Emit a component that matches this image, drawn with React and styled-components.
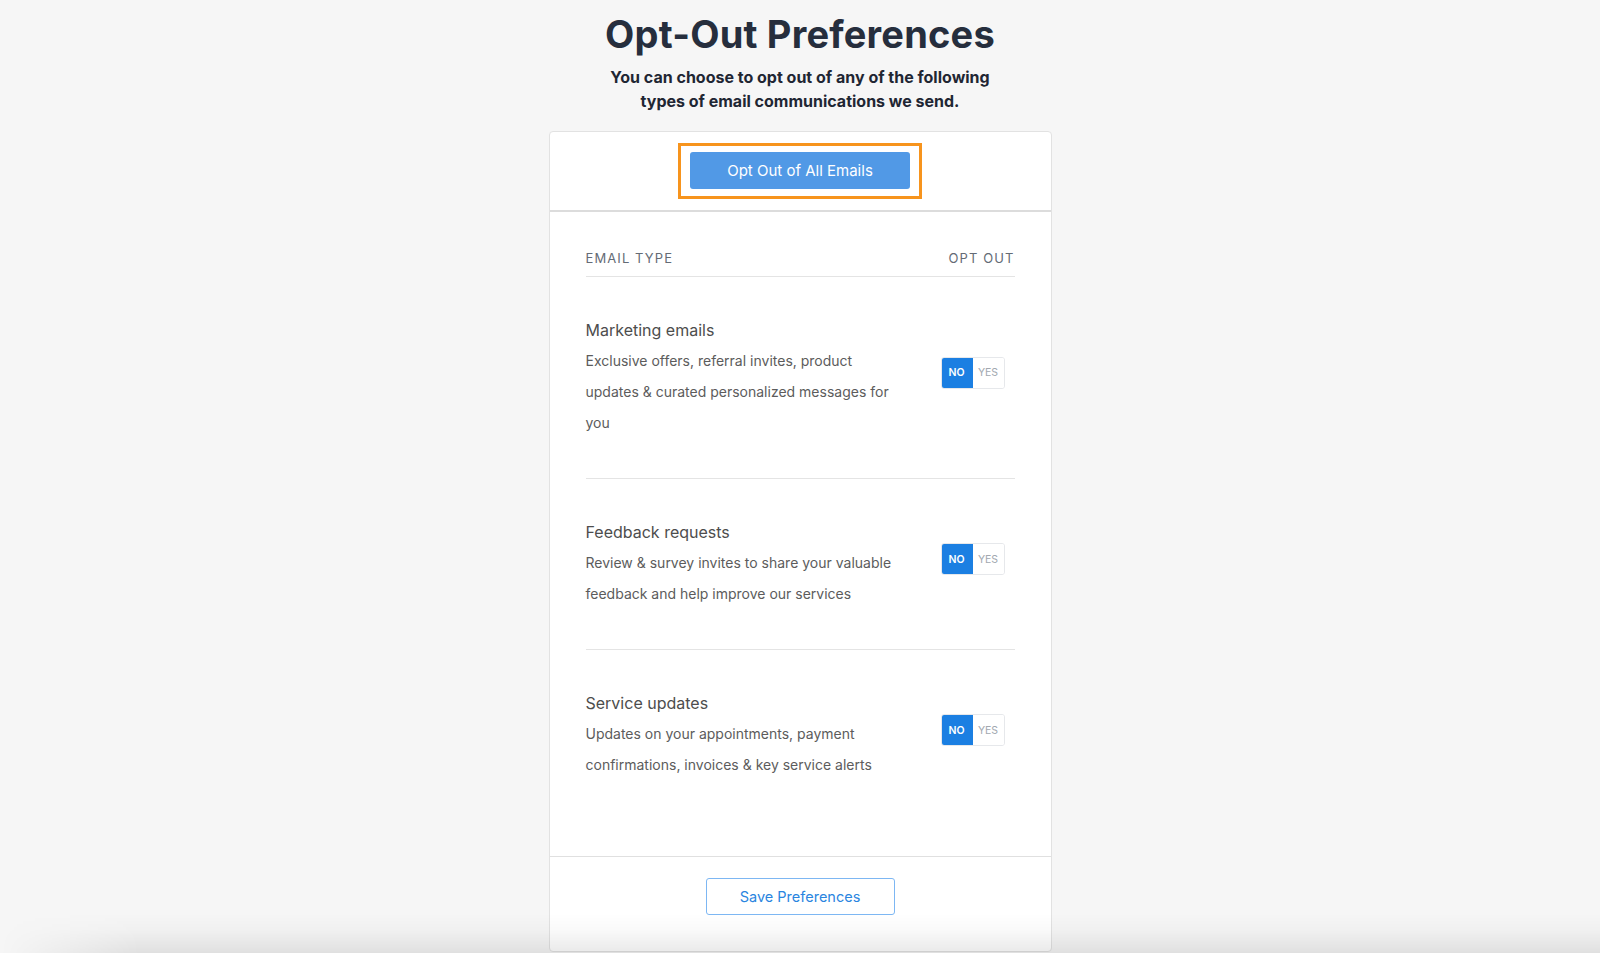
import React from "react";
import styled, { createGlobalStyle } from "styled-components";

const GlobalStyle = createGlobalStyle`
  html, body { margin: 0; padding: 0; }
  body {
    background: #f6f6f6;
    font-family: Inter, "Noto Sans", "Liberation Sans", sans-serif;
    -webkit-font-smoothing: antialiased;
  }
  * { box-sizing: border-box; }
`;

const Page = styled.main`
  display: flex;
  flex-direction: column;
  align-items: center;
  padding-top: 11px;
  min-height: 953px;
`;

const Title = styled.h1`
  margin: 0;
  font-size: 38px;
  line-height: 46px;
  font-weight: 700;
  color: #262e3d;
  letter-spacing: 0.2px;
`;

const Subtitle = styled.p`
  margin: 8px 0 0;
  max-width: 400px;
  text-align: center;
  font-size: 16px;
  line-height: 24px;
  font-weight: 700;
  color: #1f2633;
`;

const Card = styled.section`
  margin-top: 18px;
  width: 503px;
  background: #fff;
  border: 1px solid #e2e2e2;
  border-radius: 4px;
  display: flex;
  flex-direction: column;
`;

const CardHeader = styled.div`
  display: flex;
  justify-content: center;
  padding: 11px 0;
  border-bottom: 2px solid #dcdcdc;
`;

const Highlight = styled.div`
  border: 3px solid #f7941d;
  padding: 6px 9px 7px;
`;

const PrimaryButton = styled.button`
  width: 220px;
  height: 37px;
  border: none;
  border-radius: 3px;
  background: #5199e6;
  color: #fff;
  font-family: inherit;
  font-size: 15px;
  cursor: pointer;
`;

const CardBody = styled.div`
  padding: 0 36px 36px;
`;

const TableHead = styled.div`
  display: flex;
  justify-content: space-between;
  padding: 36px 0 8px;
  border-bottom: 1px solid #e4e4e4;
  font-size: 13px;
  line-height: 20px;
  letter-spacing: 1.1px;
  text-transform: uppercase;
  color: #646b75;
`;

const Row = styled.div`
  display: flex;
  justify-content: space-between;
  align-items: center;
  padding: 38px 0 40px;
  border-bottom: ${(p) => (p.$last ? "none" : "1px solid #e4e4e4")};
`;

const TextCol = styled.div`
  max-width: 318px;
`;

const RowTitle = styled.div`
  font-size: 16px;
  line-height: 30px;
  color: #4d4d4d;
`;

const RowDesc = styled.div`
  font-size: 14px;
  line-height: 31px;
  color: #5c5c5c;
`;

const Toggle = styled.div`
  display: flex;
  margin-right: 10px;
  margin-bottom: 8px;
  border-radius: 3px;
  overflow: hidden;
  border: 1px solid #e6e8eb;
`;

const ToggleOption = styled.span`
  width: ${(p) => (p.$active ? "32px" : "31px")};
  height: ${(p) => (p.$active ? "32px" : "30px")};
  margin: ${(p) => (p.$active ? "-1px 0 -1px -1px" : "0")};
  display: flex;
  align-items: center;
  justify-content: center;
  font-size: 10.5px;
  font-weight: ${(p) => (p.$active ? 600 : 400)};
  background: ${(p) => (p.$active ? "#1b7fe2" : "#fff")};
  color: ${(p) => (p.$active ? "#fff" : "#a2a8b0")};
`;

const CardFooter = styled.div`
  display: flex;
  justify-content: center;
  padding: 21px 0 36px;
  border-top: 1px solid #e0e0e0;
`;

const OutlineButton = styled.button`
  width: 189px;
  height: 37px;
  background: #fff;
  border: 1px solid #7db7f3;
  border-radius: 3px;
  color: #2a85e0;
  font-family: inherit;
  font-size: 14.5px;
  cursor: pointer;
`;

const BottomShade = styled.div`
  position: fixed;
  left: 0;
  right: 0;
  bottom: 0;
  height: 40px;
  pointer-events: none;
  background: linear-gradient(to bottom, rgba(0, 0, 0, 0), rgba(0, 0, 0, 0.02) 40%, rgba(0, 0, 0, 0.085));
  -webkit-mask-image: linear-gradient(to right, transparent 0, #000 140px);
  mask-image: linear-gradient(to right, transparent 0, #000 140px);
`;

const rows = [
  {
    title: "Marketing emails",
    desc: "Exclusive offers, referral invites, product updates & curated personalized messages for you",
  },
  {
    title: "Feedback requests",
    desc: "Review & survey invites to share your valuable feedback and help improve our services",
  },
  {
    title: "Service updates",
    desc: "Updates on your appointments, payment confirmations, invoices & key service alerts",
  },
];

export default function App() {
  return (
    <>
      <GlobalStyle />
      <Page>
        <Title>Opt-Out Preferences</Title>
        <Subtitle>
          You can choose to opt out of any of the following types of email communications we send.
        </Subtitle>
        <Card>
          <CardHeader>
            <Highlight>
              <PrimaryButton>Opt Out of All Emails</PrimaryButton>
            </Highlight>
          </CardHeader>
          <CardBody>
            <TableHead>
              <span>Email Type</span>
              <span>Opt Out</span>
            </TableHead>
            {rows.map((r, i) => (
              <Row key={r.title} $last={i === rows.length - 1}>
                <TextCol>
                  <RowTitle>{r.title}</RowTitle>
                  <RowDesc>{r.desc}</RowDesc>
                </TextCol>
                <Toggle>
                  <ToggleOption $active>NO</ToggleOption>
                  <ToggleOption>YES</ToggleOption>
                </Toggle>
              </Row>
            ))}
          </CardBody>
          <CardFooter>
            <OutlineButton>Save Preferences</OutlineButton>
          </CardFooter>
        </Card>
      </Page>
      <BottomShade />
    </>
  );
}
